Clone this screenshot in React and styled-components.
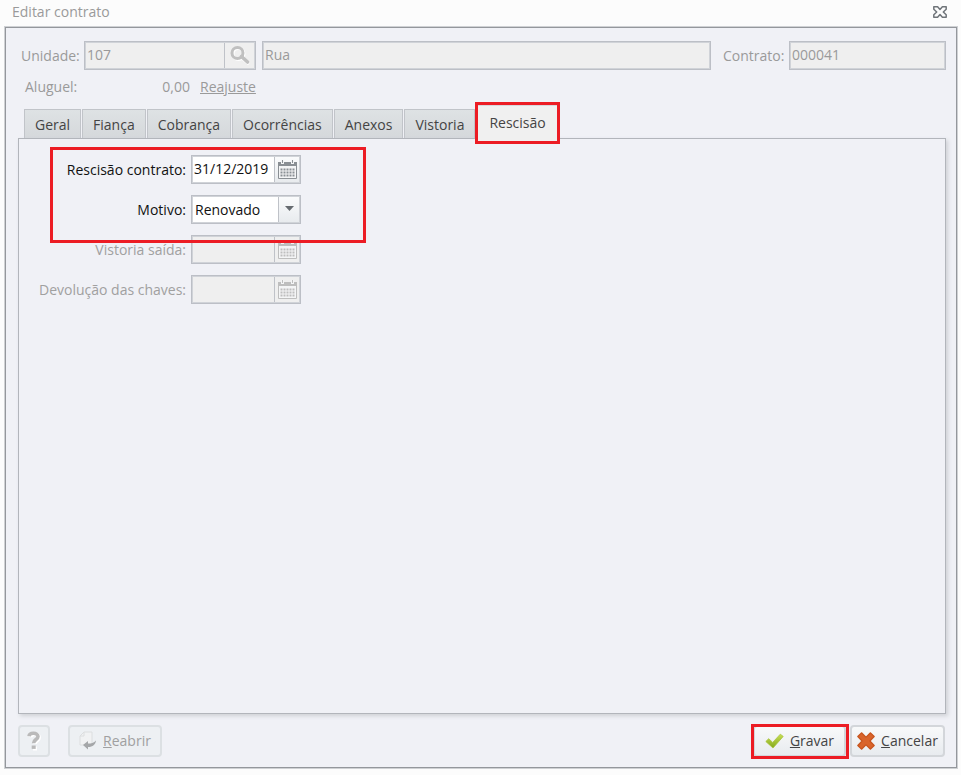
import { useState } from "react";
import styled, { createGlobalStyle, css } from "styled-components";

const GlobalStyle = createGlobalStyle`
* { box-sizing: border-box; }
body {
  margin: 0;
  background: #fcfcfc;
  color: #111;
  font-family: "Open Sans", "Noto Sans", sans-serif;
  font-size: 14px;
  line-height: 20px;
}
button, input, select { font: inherit; color: inherit; margin: 0; }
`;

// red outline laid over the part it marks
const highlight = css`
  &::after {
    content: "";
    position: absolute;
    border: 3px solid #ec1c24;
    pointer-events: none;
    z-index: 2;
  }
`;

const Window = styled.div`
  display: flex;
  flex-direction: column;
  min-height: 100vh;
  padding: 0 4px 7px 5px;
`;
const TitleBar = styled.header`
  display: flex;
  justify-content: space-between;
  align-items: center;
  height: 27px;
  padding: 0 10px 4px 7px;
  color: #9a9a9a;
`;
const Title = styled.h1`
  margin: 0;
  font-size: 14px;
  font-weight: normal;
`;
const CloseButton = styled.button`
  display: flex;
  padding: 0;
  border: 0;
  background: none;
`;
const Frame = styled.main`
  display: flex;
  flex-direction: column;
  flex: 1;
  padding: 13px 10px 10px 12px;
  border: 1px solid #94979c;
  box-shadow: 0 0 0 1px #cfd1d4;
  background: #f0f1f6;
`;
const HeaderRow = styled.div`
  display: flex;
  align-items: center;
  padding-left: 3px;
  color: #9a9a9a;
`;
const HeaderLabel = styled.label`
  flex: none;
  width: ${(p) => p.$width}px;
  margin-right: 5px;
  text-align: right;
  white-space: nowrap;
`;
const Control = styled.div`
  display: flex;
  position: relative;
  flex: ${(p) => (p.$width ? "none" : 1)};
  width: ${(p) => (p.$width ? p.$width + "px" : "auto")};
  height: 29px;
  margin-right: ${(p) => p.$after || 0}px;
  border: 1px solid #bcbfc6;
  box-shadow: inset 0 0 0 1px #d0d3d8;
  padding: 1px;
  background: ${(p) => (p.$disabled ? "#efefef" : "#fff")};
  color: ${(p) => (p.$disabled ? "#9a9a9a" : "#111")};
`;
const TextInput = styled.input`
  flex: 1;
  min-width: 0;
  padding: 0 1px 2px;
  border: 0;
  outline: none;
  background: transparent;
`;
const FieldButton = styled.button`
  display: flex;
  align-items: center;
  justify-content: center;
  flex: none;
  width: ${(p) => p.$width}px;
  padding: 0;
  border: 0;
  border-left: 1px solid #bfc2c8;
  background: ${(p) => (p.disabled ? "#efefef" : "linear-gradient(#fafbfc, #e8ebee)")};
`;
const Select = styled.select`
  flex: 1;
  min-width: 0;
  padding: 0 22px 0 2px;
  border: 0;
  outline: none;
  appearance: none;
  background: transparent;
`;
const SelectArrow = styled.span`
  display: flex;
  align-items: center;
  justify-content: center;
  position: absolute;
  top: 1px;
  right: 1px;
  bottom: 1px;
  width: 21px;
  padding-bottom: 2px;
  border-left: 1px solid #bfc2c8;
  background: linear-gradient(#fafbfc, #e8ebee);
  pointer-events: none;
`;

const RentRow = styled.div`
  display: flex;
  padding: 7px 0 6px 7px;
  color: #9a9a9a;
`;
const RentValue = styled.output`
  width: 110px;
  margin-right: 10px;
  text-align: right;
`;
const RentLabel = styled.label`
  width: 55px;
`;
const Link = styled.a`
  color: inherit;
`;

const TabList = styled.div`
  display: flex;
  align-items: flex-end;
  gap: 1px;
  height: 35px;
  padding-left: 6px;
`;
const Tab = styled.button`
  height: 29px;
  padding: 2px 10px 0;
  border: solid #c1c4c9;
  border-width: 1px 1px 0;
  background: linear-gradient(#dee2e4, #d5d8db);
  color: #444;
  white-space: nowrap;

  &[aria-selected="true"] {
    position: relative;
    height: 36px;
    margin-bottom: -3px;
    padding: 0 12px 2px;
    border-color: #d6d8dc;
    background: #f0f0f0;
    z-index: 1;
    ${highlight}
  }
  &::after { inset: -4px -2px -3px -2px; }
`;
const Panel = styled.section`
  flex: 1;
  padding: 16px 0;
  border: 1px solid #b2b5bb;
  box-shadow: 2px 2px 4px #cfd1d6;
`;
const Group = styled.div`
  position: relative;
  width: 347px;
  ${highlight}
  &::after { inset: -8px 0 -19px 31px; }
`;
const Field = styled.div`
  display: flex;
  align-items: center;
  height: 29px;
  margin-bottom: 11px;
`;
const FieldLabel = styled.label`
  width: 167px;
  margin-right: 5px;
  text-align: right;
  white-space: nowrap;
  color: ${(p) => (p.$disabled ? "#a0a0a0" : "#111")};
`;

const Footer = styled.footer`
  display: flex;
  align-items: center;
  margin-top: 11px;
`;
const FooterGap = styled.div`
  flex: 1;
`;
const ActionButton = styled.button`
  display: flex;
  align-items: center;
  justify-content: center;
  gap: 6px;
  position: relative;
  width: ${(p) => p.$width}px;
  height: 32px;
  margin-right: ${(p) => p.$after || 0}px;
  padding: 0;
  border: 2px solid #d3d6da;
  border-radius: 4px;
  background: linear-gradient(#f8f9fa, #e8ebef);
  color: #444;
  white-space: nowrap;

  &:disabled {
    border-color: #dce0e3;
    background: #edf0f3;
    color: #a0a0a0;
  }
  ${(p) => p.$marked && highlight}
  &::after { inset: -3px -5px -4px -4px; }
`;

const CloseIcon = () => (
  <svg width="14" height="12" viewBox="0 0 14 12" fill="#fcfcfc" stroke="#70757a" strokeWidth="1.5" strokeLinejoin="round">
    <path d="M.8.8H4.6L7 3.5 9.4.8h3.8v2.4L10.3 6l2.9 2.8v2.4H9.4L7 8.5 4.6 11.2H.8V8.8L3.7 6 .8 3.2Z" />
  </svg>
);
const SearchIcon = () => (
  <svg width="20" height="19" viewBox="0 0 20 19" fill="none">
    <circle cx="8.5" cy="8" r="5.5" stroke="#fff" strokeWidth="3" />
    <path d="m13 13 6 5" stroke="#fff" strokeWidth="3" />
    <circle cx="7.5" cy="7" r="5.5" stroke="#c0c0c0" strokeWidth="3" />
    <path d="m11.5 10.5 6 5.5" stroke="#c0c0c0" strokeWidth="3.6" strokeLinecap="round" />
  </svg>
);
const CalendarIcon = ({ color }) => (
  <svg width="19" height="20" viewBox="0 0 19 20">
    <path d="M.5 2.5h18v16H.5z" fill="#f4f5f6" stroke={color} />
    <path d="M0 2h19v4H0z" fill={color} />
    <path d="M3 0h3v4H3zM13 0h3v4h-3z" fill="#f4f5f6" />
    <path d="M4 0h1v3H4zM14 0h1v3h-1z" fill={color} />
    {[8, 11, 14].map((y) =>
      [2, 5, 8, 11, 14].map((x) => <rect key={x + "-" + y} x={x + 0.5} y={y + 0.5} width="2" height="2" fill={color} />)
    )}
  </svg>
);
const ArrowIcon = () => (
  <svg width="9" height="5" viewBox="0 0 9 5">
    <path d="M0 0h9L4.5 5Z" fill="#666b70" />
  </svg>
);
const HelpIcon = () => (
  <svg width="15" height="20" viewBox="0 0 15 20" fill="none">
    <g stroke="#fff" strokeWidth="4">
      <path d="M3.5 6.2C4 2.2 12 2.4 12 6.4c0 3-4 3-4 6.6" />
      <path d="M6 17.5h4" />
    </g>
    <g stroke="#bababa" strokeWidth="3.6">
      <path d="M2 5.2C2.5 1.2 11 1.2 11 5.6c0 3-4.4 3-4.4 6.6" />
      <path d="M4.7 16.2h4" strokeWidth="3.4" />
    </g>
  </svg>
);
const ReopenIcon = () => (
  <svg width="18" height="20" viewBox="0 0 18 20">
    <path d="M5 1h8v13H1V5Z" fill="#f1f2f3" stroke="#dcdedf" />
    <path d="M5 1v4H1" fill="none" stroke="#dcdedf" />
    <path d="m4 14 5-4v2.500c3 0 6-.5 8-3-.5 4-3 6.500-8 6.500v2.500Z" fill="#a5a7a9" />
  </svg>
);
const CheckIcon = () => (
  <svg width="19" height="16" viewBox="0 0 19 16">
    <defs>
      <linearGradient id="green" x1="0" y1="0" x2="0" y2="1">
        <stop stopColor="#c9df54" />
        <stop offset="1" stopColor="#83a91c" />
      </linearGradient>
    </defs>
    <path d="m.8 8.5 2.9-2.8 4 3.7 7.6-8.2 2.9 2.2L8 15Z" fill="url(#green)" stroke="#a8c43b" strokeWidth=".8" strokeLinejoin="round" />
  </svg>
);
const CrossIcon = () => (
  <svg width="18" height="18" viewBox="0 0 18 18">
    <path
      d="M4.5.8 9 5.2 13.5.8l3.7 3.7-4.3 4.5 4.3 4.5-3.7 3.7L9 12.8l-4.5 4.4L.8 13.5 5.1 9 .8 4.5Z"
      fill="#d9642b"
      stroke="#c8561f"
      strokeWidth="1.2"
      strokeLinejoin="round"
    />
  </svg>
);

const tabs = ["Geral", "Fiança", "Cobrança", "Ocorrências", "Anexos", "Vistoria", "Rescisão"];

const DateField = ({ id, label, value, disabled }) => (
  <Field>
    <FieldLabel htmlFor={id} $disabled={disabled}>{label}</FieldLabel>
    <Control $width={110} $disabled={disabled}>
      <TextInput id={id} defaultValue={value} disabled={disabled} />
      <FieldButton $width={25} disabled={disabled} aria-label="Calendário">
        <CalendarIcon color={disabled ? "#bebebe" : "#8a8f94"} />
      </FieldButton>
    </Control>
  </Field>
);

const App = () => {
  const [activeTab, setActiveTab] = useState("Rescisão");
  return (
    <Window>
      <GlobalStyle />
      <TitleBar>
        <Title>Editar contrato</Title>
        <CloseButton aria-label="Fechar"><CloseIcon /></CloseButton>
      </TitleBar>
      <Frame>
        <HeaderRow>
          <HeaderLabel htmlFor="unidade" $width={58}>Unidade:</HeaderLabel>
          <Control $width={172} $after={6} $disabled>
            <TextInput id="unidade" defaultValue="107" disabled />
            <FieldButton $width={30} disabled aria-label="Pesquisar"><SearchIcon /></FieldButton>
          </Control>
          <Control $after={12} $disabled>
            <TextInput aria-label="Endereço" defaultValue="Rua" disabled />
          </Control>
          <HeaderLabel htmlFor="contrato" $width={61}>Contrato:</HeaderLabel>
          <Control $width={157} $disabled>
            <TextInput id="contrato" defaultValue="000041" disabled />
          </Control>
        </HeaderRow>
        <RentRow>
          <RentLabel htmlFor="aluguel">Aluguel:</RentLabel>
          <RentValue id="aluguel">0,00</RentValue>
          <Link href="#reajuste">Reajuste</Link>
        </RentRow>
        <TabList role="tablist">
          {tabs.map((tab) => (
            <Tab key={tab} role="tab" aria-selected={tab === activeTab} onClick={() => setActiveTab(tab)}>
              {tab}
            </Tab>
          ))}
        </TabList>
        <Panel role="tabpanel">
          <Group>
            <DateField id="rescisao" label="Rescisão contrato:" value="31/12/2019" />
            <Field>
              <FieldLabel htmlFor="motivo">Motivo:</FieldLabel>
              <Control $width={110}>
                <Select id="motivo" defaultValue="Renovado">
                  <option>Renovado</option>
                </Select>
                <SelectArrow><ArrowIcon /></SelectArrow>
              </Control>
            </Field>
          </Group>
          <DateField id="vistoria" label="Vistoria saída:" disabled />
          <DateField id="chaves" label="Devolução das chaves:" disabled />
        </Panel>
        <Footer>
          <ActionButton $width={32} $after={18} disabled aria-label="Ajuda"><HelpIcon /></ActionButton>
          <ActionButton $width={94} disabled><ReopenIcon /><span><u>R</u>eabrir</span></ActionButton>
          <FooterGap />
          <ActionButton $width={93} $after={4} $marked><CheckIcon /><span><u>G</u>ravar</span></ActionButton>
          <ActionButton $width={95} $after={1}><CrossIcon /><span><u>C</u>ancelar</span></ActionButton>
        </Footer>
      </Frame>
    </Window>
  );
};
export default App;
